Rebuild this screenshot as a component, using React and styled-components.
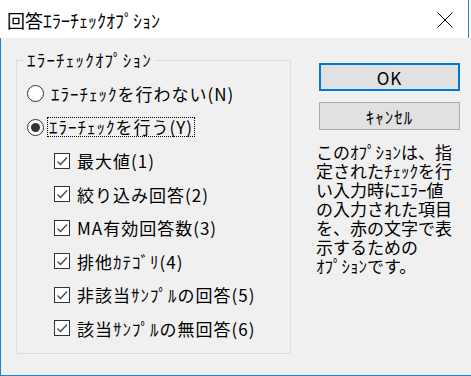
import styled, { createGlobalStyle } from 'styled-components';

const GlobalStyle = createGlobalStyle`
  html, body {
    margin: 0;
    padding: 0;
    background: #ffffff;
  }
  body {
    font-family: "Noto Sans CJK JP", "Noto Sans", sans-serif;
    color: #000;
  }
`;

const ACCENT = '#1883d7';

const Window = styled.div`
  width: 471px;
  height: 376px;
  display: flex;
  flex-direction: column;
  box-sizing: border-box;
`;

const TitleBar = styled.div`
  height: 38px;
  width: 469px;
  flex: none;
  display: flex;
  align-items: center;
  justify-content: space-between;
  background: #ffffff;
  border-right: 1px solid ${ACCENT};
  box-sizing: border-box;
  padding: 0 15px 0 7px;
`;

const Title = styled.span`
  font-size: 18px;
  line-height: 20px;
  margin-top: 2px;
  white-space: nowrap;
`;

const CloseButton = styled.div`
  width: 16px;
  height: 16px;
  display: flex;
  margin-top: 1px;
`;

const Client = styled.div`
  flex: 1;
  display: flex;
  align-items: flex-start;
  background: #f0f0f0;
  border-left: 1px solid ${ACCENT};
  border-bottom: 1px solid ${ACCENT};
  padding-left: 15px;
`;

const Group = styled.fieldset`
  margin: 12px 0 0 0;
  padding: 0;
  width: 275px;
  height: 304px;
  box-sizing: border-box;
  border: 1px solid #dcdcdc;
  min-width: 0;
`;

const Legend = styled.legend`
  margin-left: 7px;
  padding: 0 3px;
  font-size: 17px;
  line-height: 20px;
  letter-spacing: 1.2px;
  white-space: nowrap;
`;

const Options = styled.div`
  display: flex;
  flex-direction: column;
  padding-top: 7px;
`;

const Row = styled.div`
  height: 33.5px;
  display: flex;
  align-items: center;
  padding-left: ${(p) => (p.$indent ? 37 : 10)}px;
  font-size: 17px;
  letter-spacing: 1px;
  white-space: nowrap;
`;

const RadioCircle = styled.span`
  width: 17px;
  height: 17px;
  box-sizing: border-box;
  border: 1px solid #333;
  border-radius: 50%;
  background: #fff;
  display: flex;
  align-items: center;
  justify-content: center;
  flex: none;

  &::after {
    content: '';
    width: 9px;
    height: 9px;
    border-radius: 50%;
    background: ${(p) => (p.$checked ? '#333' : 'transparent')};
  }
`;

const Label = styled.span`
  margin-left: ${(p) => (p.$focused ? 4 : 6)}px;
  padding: 0 1px;
  line-height: 18px;
  border: 1px dotted ${(p) => (p.$focused ? '#000' : 'transparent')};
  margin-left: ${(p) => (p.$focused ? 3 : 5)}px;
`;

const CheckBox = styled.span`
  width: 16px;
  height: 16px;
  box-sizing: border-box;
  border: 1px solid #333;
  background: #fff;
  display: flex;
  flex: none;
`;

const CheckLabel = styled.span`
  margin-left: 7px;
`;

const Side = styled.div`
  display: flex;
  flex-direction: column;
  margin-left: 25px;
  margin-top: 25px;
`;

const Button = styled.div`
  width: 141px;
  height: 28px;
  box-sizing: border-box;
  margin-left: 3px;
  margin-bottom: 11px;
  display: flex;
  align-items: center;
  justify-content: center;
  background: #e1e1e1;
  border: ${(p) => (p.$default ? `2px solid #0078d7` : '1px solid #adadad')};
  font-size: 17px;
  letter-spacing: 1px;
  white-space: nowrap;
`;

const Description = styled.p`
  margin: 1px 0 0 0;
  font-size: 17px;
  line-height: 19px;
  white-space: nowrap;
`;

const Radio = ({ checked, focused, children }) => (
  <Row>
    <RadioCircle $checked={checked} />
    <Label $focused={focused}>{children}</Label>
  </Row>
);

const Check = ({ children }) => (
  <Row $indent>
    <CheckBox>
      <svg width="14" height="14" viewBox="0 0 14 14">
        <path d="M2.5 7.5 L5.5 10.5 L12 3.5" fill="none" stroke="#444" strokeWidth="1.3" />
      </svg>
    </CheckBox>
    <CheckLabel>{children}</CheckLabel>
  </Row>
);

const checks = [
  '最大値(1)',
  '絞り込み回答(2)',
  'MA有効回答数(3)',
  '排他ｶﾃｺﾞﾘ(4)',
  '非該当ｻﾝﾌﾟﾙの回答(5)',
  '該当ｻﾝﾌﾟﾙの無回答(6)',
];

const descLines = [
  'このｵﾌﾟｼｮﾝは、指',
  '定されたﾁｪｯｸを行',
  'い入力時にｴﾗｰ値',
  'の入力された項目',
  'を、赤の文字で表',
  '示するための',
  'ｵﾌﾟｼｮﾝです。',
];

export default function App() {
  return (
    <>
      <GlobalStyle />
      <Window>
        <TitleBar>
          <Title>回答ｴﾗｰﾁｪｯｸｵﾌﾟｼｮﾝ</Title>
          <CloseButton>
            <svg width="16" height="16" viewBox="0 0 16 16">
              <path d="M0.5 0.5 L15.5 15.5 M15.5 0.5 L0.5 15.5" stroke="#000" strokeWidth="1" />
            </svg>
          </CloseButton>
        </TitleBar>
        <Client>
          <Group>
            <Legend>ｴﾗｰﾁｪｯｸｵﾌﾟｼｮﾝ</Legend>
            <Options>
              <Radio>ｴﾗｰﾁｪｯｸを行わない(N)</Radio>
              <Radio checked focused>ｴﾗｰﾁｪｯｸを行う(Y)</Radio>
              {checks.map((c) => (
                <Check key={c}>{c}</Check>
              ))}
            </Options>
          </Group>
          <Side>
            <Button $default>OK</Button>
            <Button>ｷｬﾝｾﾙ</Button>
            <Description>
              {descLines.map((l, i) => (
                <span key={i}>
                  {l}
                  <br />
                </span>
              ))}
            </Description>
          </Side>
        </Client>
      </Window>
    </>
  );
}
